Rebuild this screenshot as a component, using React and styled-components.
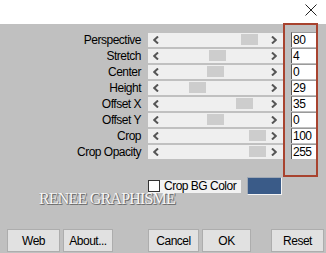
import React from 'react';
import styled, { createGlobalStyle } from 'styled-components';

const params = [
  { label: 'Perspective', value: '80', pos: 93 },
  { label: 'Stretch', value: '4', pos: 61 },
  { label: 'Center', value: '0', pos: 59 },
  { label: 'Height', value: '29', pos: 41 },
  { label: 'Offset X', value: '35', pos: 88 },
  { label: 'Offset Y', value: '0', pos: 59 },
  { label: 'Crop', value: '100', pos: 101 },
  { label: 'Crop Opacity', value: '255', pos: 101 },
];

const Arrow = ({ dir }) => (
  <svg width="6" height="8" viewBox="0 0 6 8">
    <polyline
      points={dir === 'left' ? '5,0.5 1.2,4 5,7.5' : '1,0.5 4.8,4 1,7.5'}
      fill="none"
      stroke="#555"
      strokeWidth="2"
    />
  </svg>
);

const App = () => {
  return (
    <>
      <GlobalStyle />
      <Window>
        <TitleBar>
          <svg width="12" height="12" viewBox="0 0 12 12">
            <path d="M0.5 0.5 L11.5 11.5 M11.5 0.5 L0.5 11.5" stroke="#222" strokeWidth="1" />
          </svg>
        </TitleBar>

        <Main>
          <ParamGrid>
            {params.map((p) => (
              <React.Fragment key={p.label}>
                <Label>{p.label}</Label>
                <Track>
                  <Arrow dir="left" />
                  <Thumb style={{ left: p.pos }} />
                  <Arrow dir="right" />
                </Track>
              </React.Fragment>
            ))}
          </ParamGrid>
          <ValueBox>
            {params.map((p) => (
              <ValueInput key={p.label}>{p.value}</ValueInput>
            ))}
          </ValueBox>
        </Main>

        <OptionRow>
          <CheckLabel>
            <CheckBox />
            Crop BG Color
          </CheckLabel>
          <Swatch />
        </OptionRow>

        <Watermark>RENEE GRAPHISME</Watermark>

        <ButtonBar>
          <ButtonGroup>
            <Button $w={53}>Web</Button>
            <Button $w={50}>About...</Button>
          </ButtonGroup>
          <ButtonGroup $ml={35}>
            <Button $w={51}>Cancel</Button>
            <Button $w={49}>OK</Button>
          </ButtonGroup>
          <ButtonGroup $ml={20}>
            <Button $w={53}>Reset</Button>
          </ButtonGroup>
        </ButtonBar>
      </Window>
    </>
  );
};

const GlobalStyle = createGlobalStyle`
  html, body {
    margin: 0;
    padding: 0;
    background: #c0c0c0;
  }
  body {
    font-family: "Liberation Sans", Arial, sans-serif;
  }
`;

const Window = styled.div`
  width: 326px;
  height: 253px;
  background: #c0c0c0;
  display: flex;
  flex-direction: column;
  overflow: hidden;
  font-size: 12px;
  letter-spacing: -0.5px;
  color: #000;
`;

const TitleBar = styled.div`
  height: 24px;
  flex: none;
  background: #fff;
  display: flex;
  justify-content: flex-end;
  align-items: flex-start;
  padding: 4px 9px 0 0;
  box-sizing: border-box;
`;

const Main = styled.div`
  height: 153px;
  flex: none;
  display: flex;
`;

const ParamGrid = styled.div`
  display: grid;
  grid-template-columns: 141px 135px;
  grid-auto-rows: 14px;
  column-gap: 7px;
  row-gap: 2px;
  padding-top: 9px;
`;

const Label = styled.div`
  text-align: right;
  line-height: 14px;
  white-space: nowrap;
`;

const Track = styled.div`
  position: relative;
  background: #efefef;
  display: flex;
  align-items: center;
  justify-content: space-between;
  padding: 0 6px 0 5px;
`;

const Thumb = styled.div`
  position: absolute;
  top: 1px;
  width: 17px;
  height: 11px;
  background: #cdcdcd;
`;

const ValueBox = styled.div`
  width: 35px;
  height: 154px;
  margin-top: -1px;
  box-sizing: border-box;
  border: 2px solid #a8432f;
  padding: 7px 0 0 6px;
  display: flex;
  flex-direction: column;
  gap: 1px;
`;

const ValueInput = styled.div`
  height: 15px;
  box-sizing: border-box;
  background: #fff;
  border-left: 1px solid #5a5a5a;
  border-top: 1px solid #9a9a9a;
  padding-left: 1px;
  line-height: 14px;
`;

const OptionRow = styled.div`
  height: 18px;
  flex: none;
  display: flex;
  align-items: center;
  padding-left: 148px;
  gap: 6px;
`;

const CheckLabel = styled.div`
  width: 93px;
  height: 13px;
  background: #f2f2f2;
  display: flex;
  align-items: center;
  gap: 4px;
  line-height: 13px;
`;

const CheckBox = styled.span`
  width: 12px;
  height: 12px;
  box-sizing: border-box;
  background: #fff;
  border: 1px solid #333;
`;

const Swatch = styled.div`
  width: 35px;
  height: 18px;
  box-sizing: border-box;
  background: #3a5b88;
  border: 1px solid #9fa8b4;
  border-right-color: #f4f4f4;
  border-bottom-color: #f4f4f4;
`;

const Watermark = styled.div`
  margin-top: -4px;
  padding-left: 39px;
  height: 16px;
  line-height: 16px;
  font-family: "Liberation Serif", "Times New Roman", serif;
  font-size: 16px;
  letter-spacing: -0.8px;
  color: #f7f7f7;
  text-shadow: 1px 1px 0 #6e6e6e, 1px 0 0 #8a8a8a, 0 1px 0 #8a8a8a;
`;

const ButtonBar = styled.div`
  margin-top: auto;
  display: flex;
  padding: 0 0 1px 7px;
`;

const ButtonGroup = styled.div`
  display: flex;
  gap: 3px;
  margin-left: ${(p) => (p.$ml ? `${p.$ml}px` : '0')};
`;

const Button = styled.button`
  width: ${(p) => p.$w}px;
  height: 23px;
  padding: 0;
  background: #e1e1e1;
  border: 1px solid #adadad;
  border-radius: 0;
  font-family: "Liberation Sans", Arial, sans-serif;
  font-size: 12px;
  letter-spacing: -0.5px;
  color: #000;
`;

export default App;
